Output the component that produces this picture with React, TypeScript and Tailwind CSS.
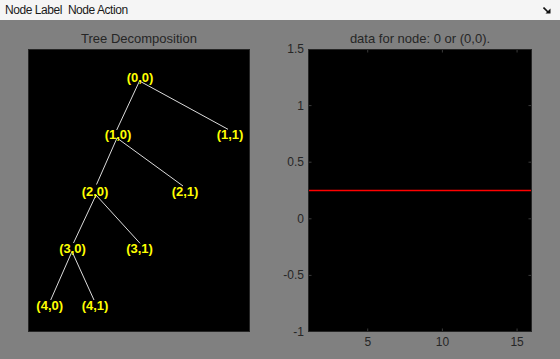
import * as React from "react"

const nodes = [
  { label: "(0,0)", x: 140, y: 77.5 },
  { label: "(1,0)", x: 118, y: 134.5 },
  { label: "(1,1)", x: 230, y: 134.5 },
  { label: "(2,0)", x: 95, y: 191 },
  { label: "(2,1)", x: 185, y: 191 },
  { label: "(3,0)", x: 72.5, y: 248 },
  { label: "(3,1)", x: 139.5, y: 248 },
  { label: "(4,0)", x: 49.7, y: 305 },
  { label: "(4,1)", x: 95, y: 305 },
]

// visible segment ends, in page pixels
const edges = [
  [139.5, 81, 116.7, 130],
  [139.5, 81, 228, 129.3],
  [117, 138, 96.5, 184.5],
  [117, 138, 183, 186],
  [96, 195, 73.5, 243],
  [96, 195, 140, 243.3],
  [72, 251.5, 50.7, 300],
  [72, 251.5, 94, 300],
]

const yTicks = [1.5, 1, 0.5, 0, -0.5, -1]
const xTicks = [5, 10, 15]

// axes: y from 1.5 (top) to -1 (bottom), x from 1 to 16
const BOX_TOP = 49
const BOX_LEFT = 308
const H = 283
const W = 224
const yPx = (v: number) => ((1.5 - v) / 2.5) * H
const xPx = (v: number) => ((v - 1) / 15) * W

function TreePanel() {
  return (
    <div className="w-[222px] flex flex-col">
      <div className="h-[18px] leading-[15px] text-[13px] text-[#262626] text-center">Tree Decomposition</div>
      <div className="h-[283px] bg-black border border-[#262626]">
        <svg className="block" width={220} height={281} viewBox="29 50 220 281">
          {edges.map((e, i) => (
            <line key={i} x1={e[0]} y1={e[1]} x2={e[2]} y2={e[3]} stroke="#dcdcdc" strokeWidth={1} />
          ))}
          {nodes.map((n) => (
            <text
              key={n.label}
              x={n.x}
              y={n.y + 4.6}
              textAnchor="middle"
              fill="#ffff00"
              fontSize={13}
              fontWeight="bold"
              fontFamily="'Liberation Sans', Arial, sans-serif"
            >
              {n.label}
            </text>
          ))}
        </svg>
      </div>
    </div>
  )
}

function DataPanel() {
  return (
    <div className="w-[224px] flex flex-col">
      <div className="h-[18px] leading-[15px] text-[13px] text-[#262626] text-center whitespace-nowrap">
        data for node: 0 or (0,0).
      </div>
      <div className="relative h-[283px] bg-black border border-[#262626]">
        <svg className="block" width={222} height={281} viewBox="309 50 222 281">
          {yTicks.map((t) => (
            <g key={t} stroke="#3a3a3a" strokeWidth={1}>
              <line x1={309} x2={311.5} y1={BOX_TOP + yPx(t)} y2={BOX_TOP + yPx(t)} />
              <line x1={528.5} x2={531} y1={BOX_TOP + yPx(t)} y2={BOX_TOP + yPx(t)} />
            </g>
          ))}
          {xTicks.map((t) => (
            <g key={t} stroke="#3a3a3a" strokeWidth={1}>
              <line x1={BOX_LEFT + xPx(t)} x2={BOX_LEFT + xPx(t)} y1={50} y2={52.5} />
              <line x1={BOX_LEFT + xPx(t)} x2={BOX_LEFT + xPx(t)} y1={328.5} y2={331} />
            </g>
          ))}
          <line x1={309} x2={531} y1={BOX_TOP + yPx(0.25)} y2={BOX_TOP + yPx(0.25)} stroke="#ff0000" strokeWidth={1.5} />
        </svg>
        {yTicks.map((t) => (
          <div
            key={t}
            className="absolute right-full mr-[5px] -translate-y-1/2 text-[12px] leading-[12px] text-[#262626] whitespace-nowrap"
            style={{ top: yPx(t) - 1 }}
          >
            {t}
          </div>
        ))}
        {xTicks.map((t) => (
          <div
            key={t}
            className="absolute top-full mt-[5px] -translate-x-1/2 text-[12px] leading-[12px] text-[#262626]"
            style={{ left: xPx(t) - 1 }}
          >
            {t}
          </div>
        ))}
      </div>
    </div>
  )
}

export default function App() {
  return (
    <div className="w-[560px] h-[359px] bg-[#808080] flex flex-col overflow-hidden font-['Liberation_Sans',Arial,sans-serif]">
      <div className="h-[20px] shrink-0 bg-[#f5f5f5] flex items-center pl-[5px] pr-[9px] text-[12px] tracking-[-0.45px] text-[#1a1a1a]">
        <span>Node Label</span>
        <span className="ml-[6px]">Node Action</span>
        <svg className="ml-auto" width={8} height={7} viewBox="0 0 8 7">
          <path d="M0.5 0.5 L5 5" stroke="#111" strokeWidth={1.6} />
          <path d="M7.5 1.5 V6.5 H2.5 Z" fill="#111" />
        </svg>
      </div>
      <div className="flex pl-[28px] pt-[11px] gap-[58px]">
        <TreePanel />
        <DataPanel />
      </div>
    </div>
  )
}
